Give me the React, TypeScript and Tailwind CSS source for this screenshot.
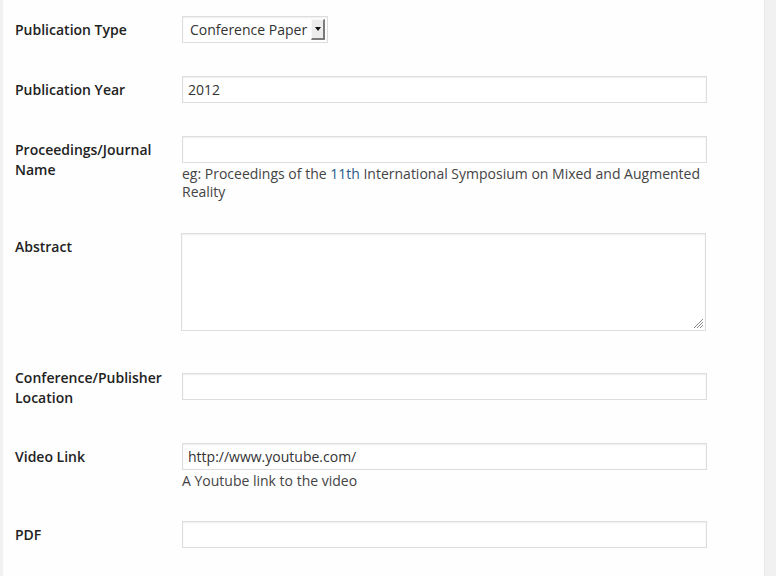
import React from 'react';

const font = { fontFamily: '"Open Sans", "Noto Sans", sans-serif' };

const inputCls =
  'block h-[27px] w-[525px] border border-[#dddddd] bg-white px-[5px] text-[14px] text-[#333333] shadow-[inset_0_1px_2px_rgba(0,0,0,0.07)] outline-none';

const Label = ({ children, pt = 'pt-[20px]' }: { children: React.ReactNode; pt?: string }) => (
  <div className={`w-[179px] shrink-0 pl-[12px] pr-[16px] text-[14px] font-semibold leading-5 text-[#222222] ${pt}`}>
    {children}
  </div>
);

const App = () => {
  return (
    <div className="flex h-[576px] w-[776px] overflow-hidden bg-[#f1f1f1]" style={font}>
      <div className="w-[3px] shrink-0 bg-[#f1f1f1]" />
      <div className="w-[761px] shrink-0 bg-[#fefefe]">
        {/* Publication Type */}
        <div className="flex h-[60px]">
          <Label>Publication Type</Label>
          <div className="pt-[16px]">
            <div className="flex h-[27px] w-[146px] items-center justify-between border border-[#dddddd] bg-white pl-[7px] pr-[2px] shadow-[inset_0_1px_2px_rgba(0,0,0,0.07)]">
              <span className="text-[14px] text-[#333333]">Conference Paper</span>
              <div className="flex h-[21px] w-[14px] items-center justify-center border-t border-l border-t-[#fafafa] border-l-[#fafafa] border-r-2 border-b-2 border-r-[#7a7a7a] border-b-[#7a7a7a] bg-[#ececec]">
                <svg width="6" height="4" viewBox="0 0 6 4">
                  <path d="M0 0h6L3 4z" fill="#111" />
                </svg>
              </div>
            </div>
          </div>
        </div>

        {/* Publication Year */}
        <div className="flex h-[60px]">
          <Label>Publication Year</Label>
          <div className="pt-[16px]">
            <input className={inputCls} defaultValue="2012" />
          </div>
        </div>

        {/* Proceedings/Journal Name */}
        <div className="flex h-[97px]">
          <Label>Proceedings/Journal Name</Label>
          <div className="pt-[16px]">
            <input className={inputCls} />
            <p className="mt-[2px] w-[525px] text-[14px] leading-[18px] text-[#444444]">
              eg: Proceedings of the <span className="text-[#2b5a8c]">11th</span> International Symposium on Mixed and Augmented Reality
            </p>
          </div>
        </div>

        {/* Abstract */}
        <div className="flex h-[131px]">
          <Label>Abstract</Label>
          <div className="-ml-px pt-[16px]">
            <div className="relative h-[98px] w-[525px]">
              <textarea className="block h-full w-full resize-none border border-[#dddddd] bg-white p-[5px] text-[14px] text-[#333333] shadow-[inset_0_1px_2px_rgba(0,0,0,0.07)] outline-none" />
              <svg className="absolute bottom-[2px] right-[2px]" width="11" height="11" viewBox="0 0 11 11">
                <path d="M10 1L1 10M10 4L4 10M10 7L7 10" stroke="#8a8a8a" strokeWidth="1" />
              </svg>
            </div>
          </div>
        </div>

        {/* Conference/Publisher Location */}
        <div className="flex h-[80px]">
          <Label>Conference/Publisher Location</Label>
          <div className="pt-[25px]">
            <input className={inputCls} />
          </div>
        </div>

        {/* Video Link */}
        <div className="flex h-[77px]">
          <Label pt="pt-[19px]">Video Link</Label>
          <div className="pt-[15px]">
            <input className={inputCls} defaultValue="http://www.youtube.com/" />
            <p className="mt-[2px] text-[14px] leading-[18px] text-[#444444]">A Youtube link to the video</p>
          </div>
        </div>

        {/* PDF */}
        <div className="flex h-[71px]">
          <Label>PDF</Label>
          <div className="pt-[16px]">
            <input className={inputCls} />
          </div>
        </div>
      </div>
      <div className="flex-1 border-l border-[#e8e8e8] bg-[#f1f1f1]" />
    </div>
  );
};

export default App;
